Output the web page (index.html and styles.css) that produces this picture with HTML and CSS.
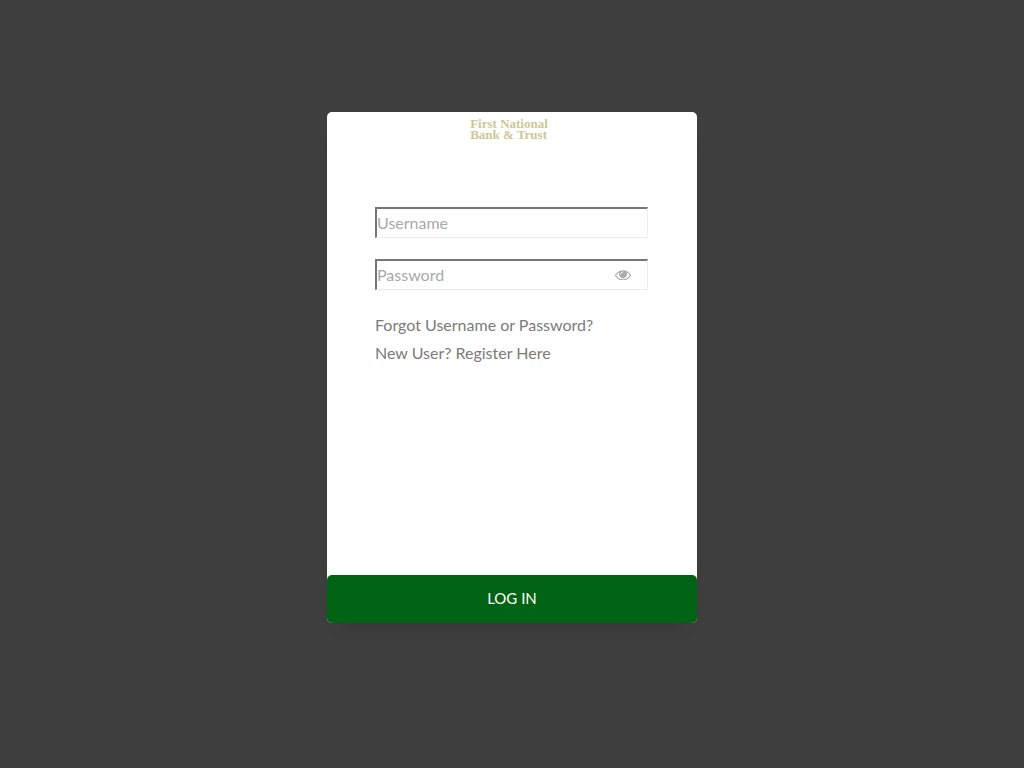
FILE: index.html
```
<!DOCTYPE html>
<html lang="en">
<head>
<meta charset="utf-8">
<meta name="viewport" content="width=device-width, initial-scale=1">
<title>First National Bank &amp; Trust</title>
<link rel="stylesheet" href="styles.css">
</head>
<body>
<main class="page">
  <form class="card">
    <header class="logo">First National<br>Bank &amp; Trust</header>
    <div class="fields">
      <input class="field" type="text" placeholder="Username" aria-label="Username" autocomplete="username">
      <div class="password">
        <input class="field" type="password" placeholder="Password" aria-label="Password" autocomplete="current-password">
        <button class="reveal" type="button" aria-label="Show password">
          <svg class="eye" viewBox="0 0 1792 1280" aria-hidden="true"><path fill="currentColor" d="M1664 704q-152-236-381-353 61 104 61 225 0 185-131.500 316.500T896 1024 579.500 892.500 448 576q0-121 61-225-229 117-381 353 133 205 333.500 326.500T896 1152t434.500-121.500T1664 704zM944 320q0-20-14-34t-34-14q-125 0-214.500 89.500T592 576q0 20 14 34t34 14 34-14 14-34q0-86 61-147t147-61q20 0 34-14t14-34zm848 384q0 34-20 69-140 230-376.500 368.500T896 1280t-499.500-139T20 773Q0 738 0 704t20-69q140-229 376.500-368T896 128t499.500 139T1772 635q20 35 20 69z"/></svg>
        </button>
      </div>
    </div>
    <nav class="links">
      <a class="link" href="#forgot">Forgot Username or Password?</a>
      <a class="link" href="#register">New User? Register Here</a>
    </nav>
    <button class="submit" type="submit">LOG IN</button>
  </form>
</main>
</body>
</html>
```
FILE: styles.css
```
* {
  box-sizing: border-box;
}

body {
  margin: 0;
  min-height: 100vh;
  background: #3e3e3e;
  color: #7b7b7b;
  font: 16px/20px Lato, "Liberation Sans", sans-serif;
}

.page {
  display: flex;
  justify-content: center;
  align-items: flex-start;
  padding: 112px 16px 32px;
}

.card {
  display: flex;
  flex-direction: column;
  width: 100%;
  max-width: 370px;
  min-height: 511px;
  background: #fff;
  border-radius: 5px;
  box-shadow: 0 16px 20px -16px rgba(0, 0, 0, 0.2);
}

.logo {
  align-self: center;
  padding: 6px 6px 0 0;
  color: #cdc796;
  font: bold 13px/11px "Liberation Serif", serif;
}

.fields {
  display: flex;
  flex-direction: column;
  gap: 21px;
  padding: 67px 49px 0 48px;
}

.field {
  display: block;
  width: 100%;
  height: 31px;
  padding: 0 0 2px;
  border-style: solid;
  border-width: 2px 1px 1px 2px;
  border-color: #767676 #ececec #ececec #767676;
  border-radius: 0;
  background: #fff;
  color: #555;
  font: inherit;
}

.field::placeholder {
  color: #a9a9a9;
  opacity: 1;
}

.password {
  position: relative;
}

.password .field {
  padding-right: 40px;
}

.reveal {
  position: absolute;
  top: 0;
  right: 8px;
  display: grid;
  place-items: center;
  width: 34px;
  height: 31px;
  padding: 0;
  border: 0;
  background: none;
  color: #aaa;
}

.eye {
  width: 16px;
}

.links {
  display: flex;
  flex-direction: column;
  align-items: flex-start;
  gap: 8px;
  padding: 25px 48px 0;
}

.link {
  color: inherit;
  text-decoration: none;
}

.submit {
  height: 48px;
  margin-top: auto;
  padding: 0 0 2px;
  border: 0;
  border-radius: 5px;
  background: #006414;
  color: #fff;
  font: inherit;
  font-size: 15px;
}
```
